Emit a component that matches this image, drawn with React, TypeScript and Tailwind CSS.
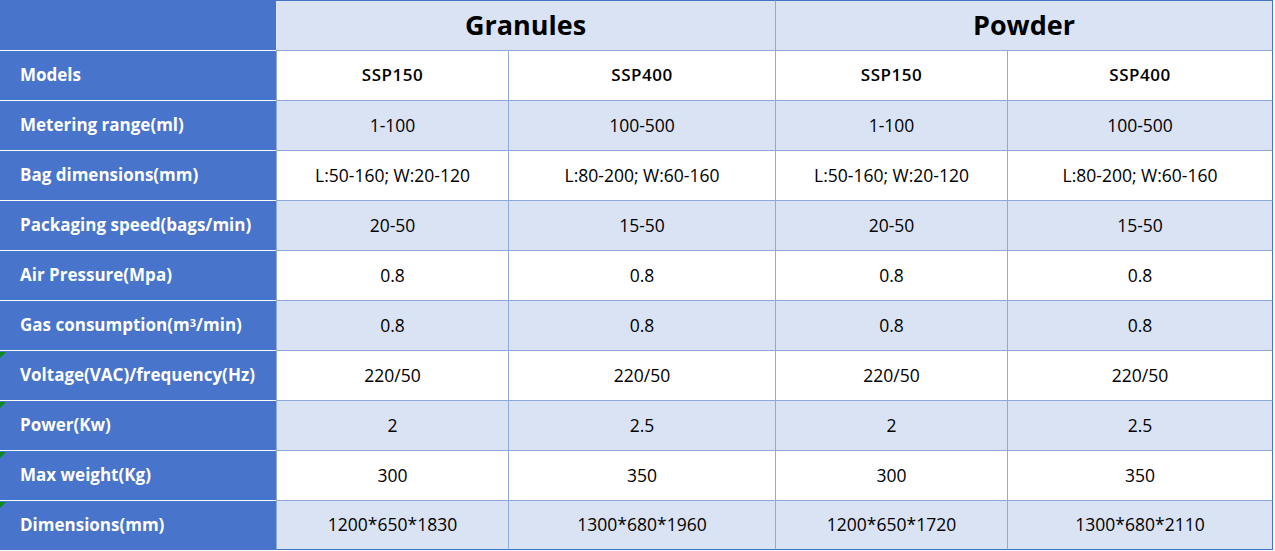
const font = { fontFamily: '"Open Sans", "Noto Sans", Arial, sans-serif' }

interface Row {
  label: React.ReactNode
  values: string[]
  flag?: boolean
}

const rows: Row[] = [
  { label: "Metering range(ml)", values: ["1-100", "100-500", "1-100", "100-500"] },
  {
    label: "Bag dimensions(mm)",
    values: ["L:50-160; W:20-120", "L:80-200; W:60-160", "L:50-160; W:20-120", "L:80-200; W:60-160"],
  },
  { label: "Packaging speed(bags/min)", values: ["20-50", "15-50", "20-50", "15-50"] },
  { label: "Air Pressure(Mpa)", values: ["0.8", "0.8", "0.8", "0.8"] },
  {
    label: (
      <>
        Gas consumption(m<sup className="relative -top-[2px] text-[11px]">3</sup>/min)
      </>
    ),
    values: ["0.8", "0.8", "0.8", "0.8"],
  },
  { label: "Voltage(VAC)/frequency(Hz)", values: ["220/50", "220/50", "220/50", "220/50"], flag: true },
  { label: "Power(Kw)", values: ["2", "2.5", "2", "2.5"], flag: true },
  { label: "Max weight(Kg)", values: ["300", "350", "300", "350"], flag: true },
  {
    label: "Dimensions(mm)",
    values: ["1200*650*1830", "1300*680*1960", "1200*650*1720", "1300*680*2110"],
    flag: true,
  },
]

const grid = "grid grid-cols-[276px_232px_267px_232px_266px]"

function LabelCell({ children, flag }: { children: React.ReactNode; flag?: boolean }) {
  return (
    <div className="relative flex h-[50px] items-center border-t border-white bg-[#4874cb] pb-[1px] pl-[20px] text-[17px] font-bold text-white">
      {flag && (
        <span className="absolute left-0 top-[1px] h-0 w-0 border-r-[6px] border-t-[6px] border-r-transparent border-t-[#0b8a1e]" />
      )}
      {children}
    </div>
  )
}

export default function App() {
  return (
    <div className="h-[551px] w-[1275px] overflow-hidden bg-white text-black" style={font}>
      {/* group header */}
      <div className={grid}>
        <div className="h-[50px] bg-[#4874cb]" />
        <div className="col-span-2 flex h-[50px] items-center justify-center border-t border-[#4472c4] bg-[#dae3f3] text-[27px] font-bold">
          Granules
        </div>
        <div className="col-span-2 flex h-[50px] items-center justify-center border-l border-r border-t border-[#8eaadc] border-t-[#4472c4] border-r-[#4472c4] bg-[#dae3f3] text-[27px] font-bold">
          Powder
        </div>
      </div>

      {/* models */}
      <div className={grid}>
        <LabelCell>Models</LabelCell>
        {["SSP150", "SSP400", "SSP150", "SSP400"].map((m, i) => (
          <div
            key={i}
            className={`flex h-[50px] items-center justify-center border-t border-l border-[#8eaadc] bg-white pb-[1px] text-[17px] font-semibold tracking-[0.5px] ${i === 3 ? "border-r border-r-[#4472c4]" : ""}`}
          >
            {m}
          </div>
        ))}
      </div>

      {rows.map((row, r) => (
        <div key={r} className={grid}>
          <LabelCell flag={row.flag}>{row.label}</LabelCell>
          {row.values.map((v, i) => (
            <div
              key={i}
              className={`flex h-[50px] items-center justify-center border-t border-l border-[#8eaadc] pb-[1px] text-[17.5px] ${r % 2 === 0 ? "bg-[#dae3f3]" : "bg-white"} ${i === 3 ? "border-r border-r-[#4472c4]" : ""} ${r === rows.length - 1 ? "border-b border-b-[#4472c4]" : ""}`}
            >
              {v}
            </div>
          ))}
        </div>
      ))}
    </div>
  )
}
